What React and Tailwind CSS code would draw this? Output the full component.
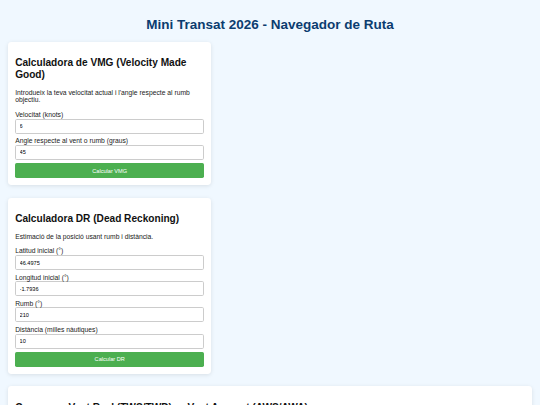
import React from "react";

function Field({ label, value }) {
  return (
    <div>
      <label className="block text-[6.75px] leading-[1.15] text-[#222]">{label}</label>
      <input
        type="number"
        defaultValue={value}
        className="block w-full h-[15px] mb-[3.4px] px-[3.4px] text-[5.6px] text-black bg-white border border-[#ccc] rounded-[1.7px] outline-none"
      />
    </div>
  );
}

function Card({ title, intro, fields, button, wide }) {
  return (
    <section
      className={
        (wide ? "w-full" : "w-[202.6px]") +
        " bg-white rounded-[3.4px] px-[6.75px] pt-[6.75px] pb-[6.75px] mb-[12.7px] shadow-[0_1px_4px_rgba(0,0,0,0.1)]"
      }
    >
      <h2 className="text-[10.125px] leading-[1.15] font-bold text-[#111] mt-[8.4px] mb-[8.4px]">{title}</h2>
      {intro && <p className="text-[6.75px] leading-[1.15] text-[#222] mb-[6.75px]">{intro}</p>}
      {fields &&
        fields.map((f) => <Field key={f.label} label={f.label} value={f.value} />)}
      {button && (
        <button className="block w-full h-[15px] bg-[#4caf50] text-white text-[5.6px] rounded-[1.7px]">
          {button}
        </button>
      )}
    </section>
  );
}

export default function App() {
  return (
    <div
      className="min-h-screen bg-[#f0f8ff] px-[8.4px] pt-[8.4px] pb-[8.4px]"
      style={{ fontFamily: '"Liberation Sans", Arial, sans-serif' }}
    >
      <h1 className="text-center text-[13.5px] leading-[1.15] font-bold text-[#0b3c6f] my-[9px]">
        Mini Transat 2026 - Navegador de Ruta
      </h1>

      <Card
        title="Calculadora de VMG (Velocity Made Good)"
        intro="Introdueix la teva velocitat actual i l'angle respecte al rumb objectiu."
        fields={[
          { label: "Velocitat (knots)", value: "6" },
          { label: "Angle respecte al vent o rumb (graus)", value: "45" },
        ]}
        button="Calcular VMG"
      />

      <Card
        title="Calculadora DR (Dead Reckoning)"
        intro="Estimació de la posició usant rumb i distància."
        fields={[
          { label: "Latitud inicial (°)", value: "46.4975" },
          { label: "Longitud inicial (°)", value: "-1.7936" },
          { label: "Rumb (°)", value: "210" },
          { label: "Distància (milles nàutiques)", value: "10" },
        ]}
        button="Calcular DR"
      />

      <Card
        wide
        title="Conversor Vent Real (TWS/TWD) → Vent Aparent (AWS/AWA)"
        intro="Calcula el vent aparent a partir del vent real i la velocitat del vaixell."
        fields={[
          { label: "Velocitat del vent real (knots)", value: "15" },
          { label: "Direcció del vent real (graus)", value: "270" },
        ]}
        button="Calcular vent aparent"
      />
    </div>
  );
}
